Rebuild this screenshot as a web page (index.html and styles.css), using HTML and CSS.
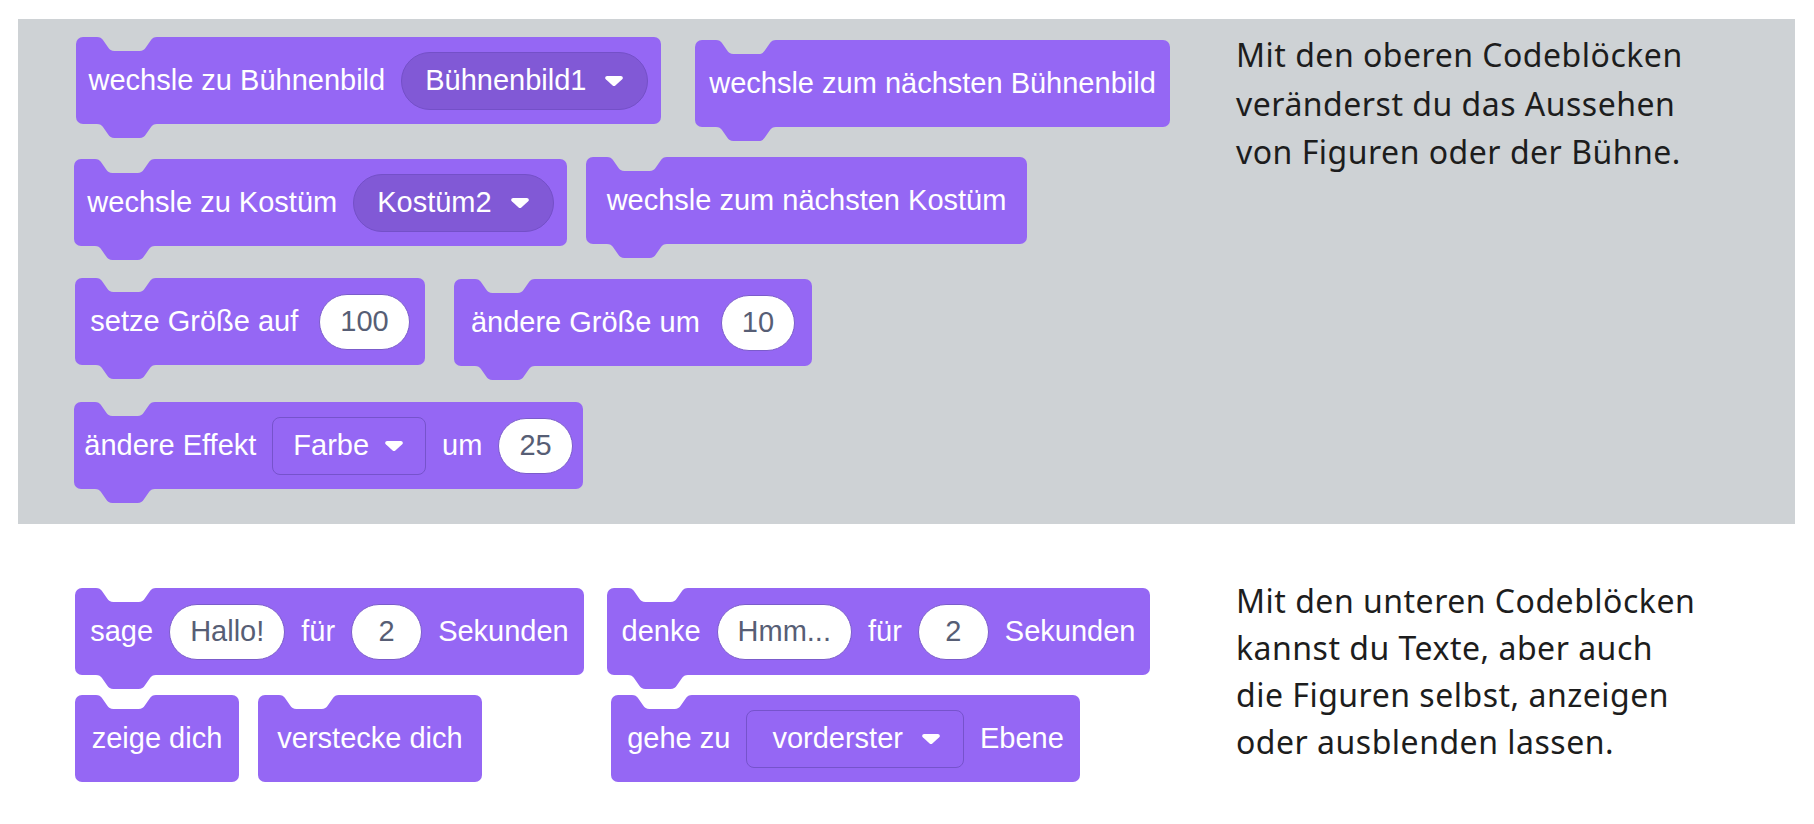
FILE: index.html
```html
<!DOCTYPE html>
<html lang="de">
<head>
<meta charset="utf-8">
<title>Aussehen-Blöcke</title>
<link rel="stylesheet" href="styles.css">
</head>
<body>
<section class="panel">
  <div class="stack">
    <div class="row">
      <div class="block w-a shift-r1">
        <span>wechsle zu Bühnenbild</span>
        <span class="menu">Bühnenbild1<svg class="arrow" viewBox="0 0 18 10"><path d="M2.2 0H15.8C17.6 0 18.5 2 17.2 3.3L10.4 9.4C9.6 10.1 8.4 10.1 7.6 9.4L0.8 3.3C-0.5 2 0.4 0 2.2 0Z"/></svg></span>
      </div>
      <div class="block w-b gap-34 down-3">
        <span>wechsle zum nächsten Bühnenbild</span>
      </div>
    </div>
    <div class="row row-2">
      <div class="block w-c shift-l1 down-2">
        <span>wechsle zu Kostüm</span>
        <span class="menu">Kostüm2<svg class="arrow" viewBox="0 0 18 10"><path d="M2.2 0H15.8C17.6 0 18.5 2 17.2 3.3L10.4 9.4C9.6 10.1 8.4 10.1 7.6 9.4L0.8 3.3C-0.5 2 0.4 0 2.2 0Z"/></svg></span>
      </div>
      <div class="block w-d gap-19">
        <span>wechsle zum nächsten Kostüm</span>
      </div>
    </div>
    <div class="row row-3">
      <div class="block block-loose w-e">
        <span>setze Größe auf</span>
        <span class="field">100</span>
      </div>
      <div class="block block-loose w-f gap-29 down-1">
        <span>ändere Größe um</span>
        <span class="field">10</span>
      </div>
    </div>
    <div class="row row-4">
      <div class="block w-g shift-l1">
        <span>ändere Effekt</span>
        <span class="select">Farbe<svg class="arrow" viewBox="0 0 18 10"><path d="M2.2 0H15.8C17.6 0 18.5 2 17.2 3.3L10.4 9.4C9.6 10.1 8.4 10.1 7.6 9.4L0.8 3.3C-0.5 2 0.4 0 2.2 0Z"/></svg></span>
        <span>um</span>
        <span class="field">25</span>
      </div>
    </div>
  </div>
  <p class="note note-top">Mit den oberen Codeblöcken<br>veränderst du das Aussehen<br>von Figuren oder der Bühne.</p>
</section>

<section class="lower">
  <div class="columns">
    <div class="col">
      <div class="block w-h">
        <span>sage</span>
        <span class="field">Hallo!</span>
        <span>für</span>
        <span class="field">2</span>
        <span>Sekunden</span>
      </div>
      <div class="row row-6">
        <div class="block w-j">
          <span>zeige dich</span>
        </div>
        <div class="block w-k gap-19">
          <span>verstecke dich</span>
        </div>
      </div>
    </div>
    <div class="col">
      <div class="block w-i">
        <span>denke</span>
        <span class="field">Hmm...</span>
        <span>für</span>
        <span class="field">2</span>
        <span>Sekunden</span>
      </div>
      <div class="row row-6">
        <div class="block w-l shift-r4">
          <span>gehe zu</span>
          <span class="select select-wide">vorderster<svg class="arrow" viewBox="0 0 18 10"><path d="M2.2 0H15.8C17.6 0 18.5 2 17.2 3.3L10.4 9.4C9.6 10.1 8.4 10.1 7.6 9.4L0.8 3.3C-0.5 2 0.4 0 2.2 0Z"/></svg></span>
          <span>Ebene</span>
        </div>
      </div>
    </div>
  </div>
  <p class="note note-bottom">Mit den unteren Codeblöcken<br>kannst du Texte, aber auch<br>die Figuren selbst, anzeigen<br>oder ausblenden lassen.</p>
</section>
</body>
</html>
```

FILE: styles.css
```css
* {
  box-sizing: border-box;
}

body {
  margin: 0;
  background: #ffffff;
  font-family: "Liberation Sans", Arial, sans-serif;
}

/* ---------- sections ---------- */
.panel {
  --bg: #ced2d5;
  background: var(--bg);
  margin: 19px 19px 0 18px;
  height: 505px;
  padding-left: 57px;
  display: grid;
  grid-template-columns: 1161px 1fr;
  align-items: start;
}

.lower {
  --bg: #ffffff;
  margin: 0 19px 0 18px;
  padding-left: 57px;
  display: grid;
  grid-template-columns: 1161px 1fr;
  align-items: start;
}

.stack {
  padding-top: 18px;
  display: flex;
  flex-direction: column;
}

.columns {
  margin-top: 64px;
  display: flex;
  align-items: flex-start;
  gap: 23px;
}

.col {
  display: flex;
  flex-direction: column;
}

.row {
  display: flex;
  align-items: flex-start;
}

.row-2 { margin-top: 30px; }
.row-3 { margin-top: 32px; }
.row-4 { margin-top: 36px; }
.row-6 { margin-top: 20px; }

/* ---------- note text ---------- */
.note {
  margin: 0;
  font-family: "Noto Sans", "Open Sans", sans-serif;
  font-size: 32px;
  letter-spacing: 0.5px;
  color: #1d1d1d;
}

.note-top {
  margin-top: 12px;
  line-height: 48.5px;
}

.note-bottom {
  margin-top: 53px;
  line-height: 47px;
}

/* ---------- Scratch blocks ---------- */
.block {
  position: relative;
  flex: none;
  height: 87px;
  background: #9567f4;
  border-radius: 7px;
  display: flex;
  align-items: center;
  justify-content: center;
  gap: 16px;
  color: #ffffff;
  font-size: 29px;
  white-space: nowrap;
}

.block-loose {
  gap: 21px;
}

.block::before {
  content: "";
  position: absolute;
  top: 0;
  left: 21px;
  width: 60px;
  height: 14px;
  background: var(--bg);
  clip-path: path("M0 0C3 0 4.6 1.2 5.8 2.8L11.2 10.6C12.6 12.7 14.4 14 17.4 14H42.6C45.6 14 47.4 12.7 48.8 10.6L54.2 2.8C55.4 1.2 57 0 60 0Z");
}

.block::after {
  content: "";
  position: absolute;
  top: calc(100% - 1px);
  left: 21px;
  width: 60px;
  height: 15px;
  background: #9567f4;
  clip-path: path("M0 0H60V1C57 1 55.4 2.2 54.2 3.8L48.8 11.6C47.4 13.7 45.6 15 42.6 15H17.4C14.4 15 12.6 13.7 11.2 11.6L5.8 3.8C4.6 2.2 3 1 0 1Z");
}

/* block widths */
.w-a { width: 585px; }
.w-b { width: 475px; }
.w-c { width: 493px; }
.w-d { width: 441px; }
.w-e { width: 350px; }
.w-f { width: 358px; }
.w-g { width: 509px; }
.w-h { width: 509px; }
.w-i { width: 543px; }
.w-j { width: 164px; }
.w-k { width: 224px; }
.w-l { width: 469px; }

/* small placement offsets between neighbouring blocks */
.gap-34 { margin-left: 34px; }
.gap-29 { margin-left: 29px; }
.gap-19 { margin-left: 19px; }
.shift-r1 { margin-left: 1px; }
.shift-r4 { margin-left: 4px; }
.shift-l1 { margin-left: -1px; }
.down-1 { margin-top: 1px; }
.down-2 { margin-top: 2px; }
.down-3 { margin-top: 3px; }

/* round dropdown (costume / backdrop) */
.menu {
  height: 58px;
  padding: 0 24px 0 23px;
  display: flex;
  align-items: center;
  gap: 19px;
  background: #8159d6;
  border: 1px solid #7450c8;
  border-radius: 29px;
}

/* square dropdown (effect / layer) */
.select {
  height: 58px;
  padding: 0 22px 0 20px;
  display: flex;
  align-items: center;
  gap: 16px;
  background: #9567f4;
  border: 1px solid #7653cc;
  border-radius: 8px;
}

.select-wide {
  padding: 0 23px 0 25px;
  gap: 19px;
}

.arrow {
  width: 18px;
  height: 10px;
  fill: #ffffff;
  flex: none;
}

/* white text / number inputs */
.field {
  height: 56px;
  min-width: 71px;
  padding: 0 20px;
  display: flex;
  align-items: center;
  justify-content: center;
  background: #ffffff;
  color: #575e75;
  border: 1px solid #7b5ccb;
  border-radius: 28px;
}
```
